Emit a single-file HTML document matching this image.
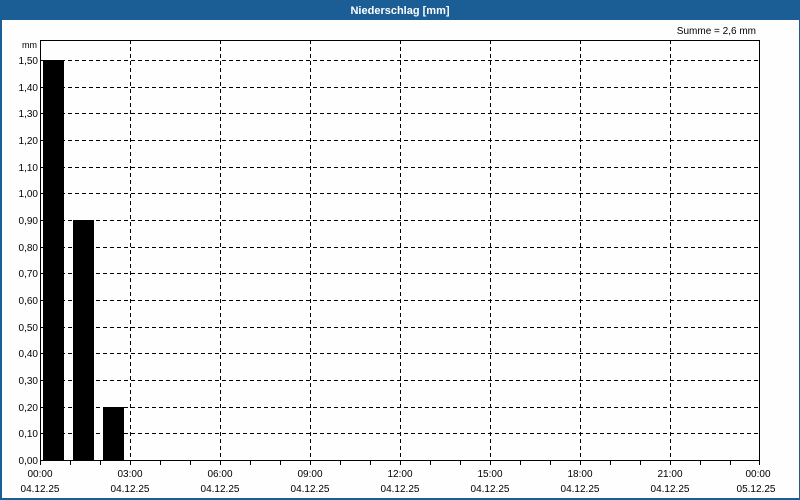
<!DOCTYPE html>
<html><head><meta charset="utf-8"><style>
html,body{margin:0;padding:0;background:#fff}
svg{display:block}
text{font-family:"Liberation Sans","DejaVu Sans",sans-serif;font-size:10px;fill:#000}
</style></head><body>
<svg width="800" height="500" xmlns="http://www.w3.org/2000/svg">
<rect x="0" y="0" width="800" height="500" fill="#1b5e96"/>
<rect x="2" y="20" width="797" height="478" fill="#fdfefd"/>
<text x="400" y="14" text-anchor="middle" style="font-weight:bold;fill:#fff;font-size:11px">Niederschlag [mm]</text>
<text x="756" y="34" text-anchor="end">Summe = 2,6 mm</text>
<text x="37" y="48" text-anchor="end" style="font-size:9px">mm</text>
<g stroke="#000" stroke-width="1" stroke-dasharray="4,3" shape-rendering="crispEdges">
<line x1="40" y1="60.5" x2="760" y2="60.5"/><line x1="40" y1="87.5" x2="760" y2="87.5"/><line x1="40" y1="113.5" x2="760" y2="113.5"/><line x1="40" y1="140.5" x2="760" y2="140.5"/><line x1="40" y1="167.5" x2="760" y2="167.5"/><line x1="40" y1="193.5" x2="760" y2="193.5"/><line x1="40" y1="220.5" x2="760" y2="220.5"/><line x1="40" y1="247.5" x2="760" y2="247.5"/><line x1="40" y1="273.5" x2="760" y2="273.5"/><line x1="40" y1="300.5" x2="760" y2="300.5"/><line x1="40" y1="327.5" x2="760" y2="327.5"/><line x1="40" y1="353.5" x2="760" y2="353.5"/><line x1="40" y1="380.5" x2="760" y2="380.5"/><line x1="40" y1="407.5" x2="760" y2="407.5"/><line x1="40" y1="433.5" x2="760" y2="433.5"/>
<line x1="130.5" y1="40" x2="130.5" y2="460"/><line x1="220.5" y1="40" x2="220.5" y2="460"/><line x1="310.5" y1="40" x2="310.5" y2="460"/><line x1="400.5" y1="40" x2="400.5" y2="460"/><line x1="490.5" y1="40" x2="490.5" y2="460"/><line x1="580.5" y1="40" x2="580.5" y2="460"/><line x1="670.5" y1="40" x2="670.5" y2="460"/>
</g>
<g fill="#000" shape-rendering="crispEdges">
<rect x="43" y="60" width="21" height="400"/>
<rect x="73" y="220" width="21" height="240"/>
<rect x="103" y="407" width="21" height="53"/>
</g>
<rect x="40.5" y="40.5" width="719" height="420" fill="none" stroke="#000" stroke-width="1" shape-rendering="crispEdges"/>
<g stroke="#000" shape-rendering="crispEdges">
<line x1="40.5" y1="460" x2="40.5" y2="465"/><line x1="70.5" y1="460" x2="70.5" y2="465"/><line x1="100.5" y1="460" x2="100.5" y2="465"/><line x1="130.5" y1="460" x2="130.5" y2="465"/><line x1="160.5" y1="460" x2="160.5" y2="465"/><line x1="190.5" y1="460" x2="190.5" y2="465"/><line x1="220.5" y1="460" x2="220.5" y2="465"/><line x1="250.5" y1="460" x2="250.5" y2="465"/><line x1="280.5" y1="460" x2="280.5" y2="465"/><line x1="310.5" y1="460" x2="310.5" y2="465"/><line x1="340.5" y1="460" x2="340.5" y2="465"/><line x1="370.5" y1="460" x2="370.5" y2="465"/><line x1="400.5" y1="460" x2="400.5" y2="465"/><line x1="430.5" y1="460" x2="430.5" y2="465"/><line x1="460.5" y1="460" x2="460.5" y2="465"/><line x1="490.5" y1="460" x2="490.5" y2="465"/><line x1="520.5" y1="460" x2="520.5" y2="465"/><line x1="550.5" y1="460" x2="550.5" y2="465"/><line x1="580.5" y1="460" x2="580.5" y2="465"/><line x1="610.5" y1="460" x2="610.5" y2="465"/><line x1="640.5" y1="460" x2="640.5" y2="465"/><line x1="670.5" y1="460" x2="670.5" y2="465"/><line x1="700.5" y1="460" x2="700.5" y2="465"/><line x1="730.5" y1="460" x2="730.5" y2="465"/><line x1="759.5" y1="460" x2="759.5" y2="465"/>
</g>
<g text-anchor="end">
<text x="38" y="64">1,50</text><text x="38" y="91">1,40</text><text x="38" y="117">1,30</text><text x="38" y="144">1,20</text><text x="38" y="171">1,10</text><text x="38" y="197">1,00</text><text x="38" y="224">0,90</text><text x="38" y="251">0,80</text><text x="38" y="277">0,70</text><text x="38" y="304">0,60</text><text x="38" y="331">0,50</text><text x="38" y="357">0,40</text><text x="38" y="384">0,30</text><text x="38" y="411">0,20</text><text x="38" y="437">0,10</text><text x="38" y="464">0,00</text>
</g>
<g text-anchor="middle">
<text x="40" y="477">00:00</text><text x="40" y="492">04.12.25</text>
<text x="130" y="477">03:00</text><text x="130" y="492">04.12.25</text>
<text x="220" y="477">06:00</text><text x="220" y="492">04.12.25</text>
<text x="310" y="477">09:00</text><text x="310" y="492">04.12.25</text>
<text x="400" y="477">12:00</text><text x="400" y="492">04.12.25</text>
<text x="490" y="477">15:00</text><text x="490" y="492">04.12.25</text>
<text x="580" y="477">18:00</text><text x="580" y="492">04.12.25</text>
<text x="670" y="477">21:00</text><text x="670" y="492">04.12.25</text>
<text x="758" y="477">00:00</text><text x="756" y="492">05.12.25</text>
</g>
</svg>
</body></html>
